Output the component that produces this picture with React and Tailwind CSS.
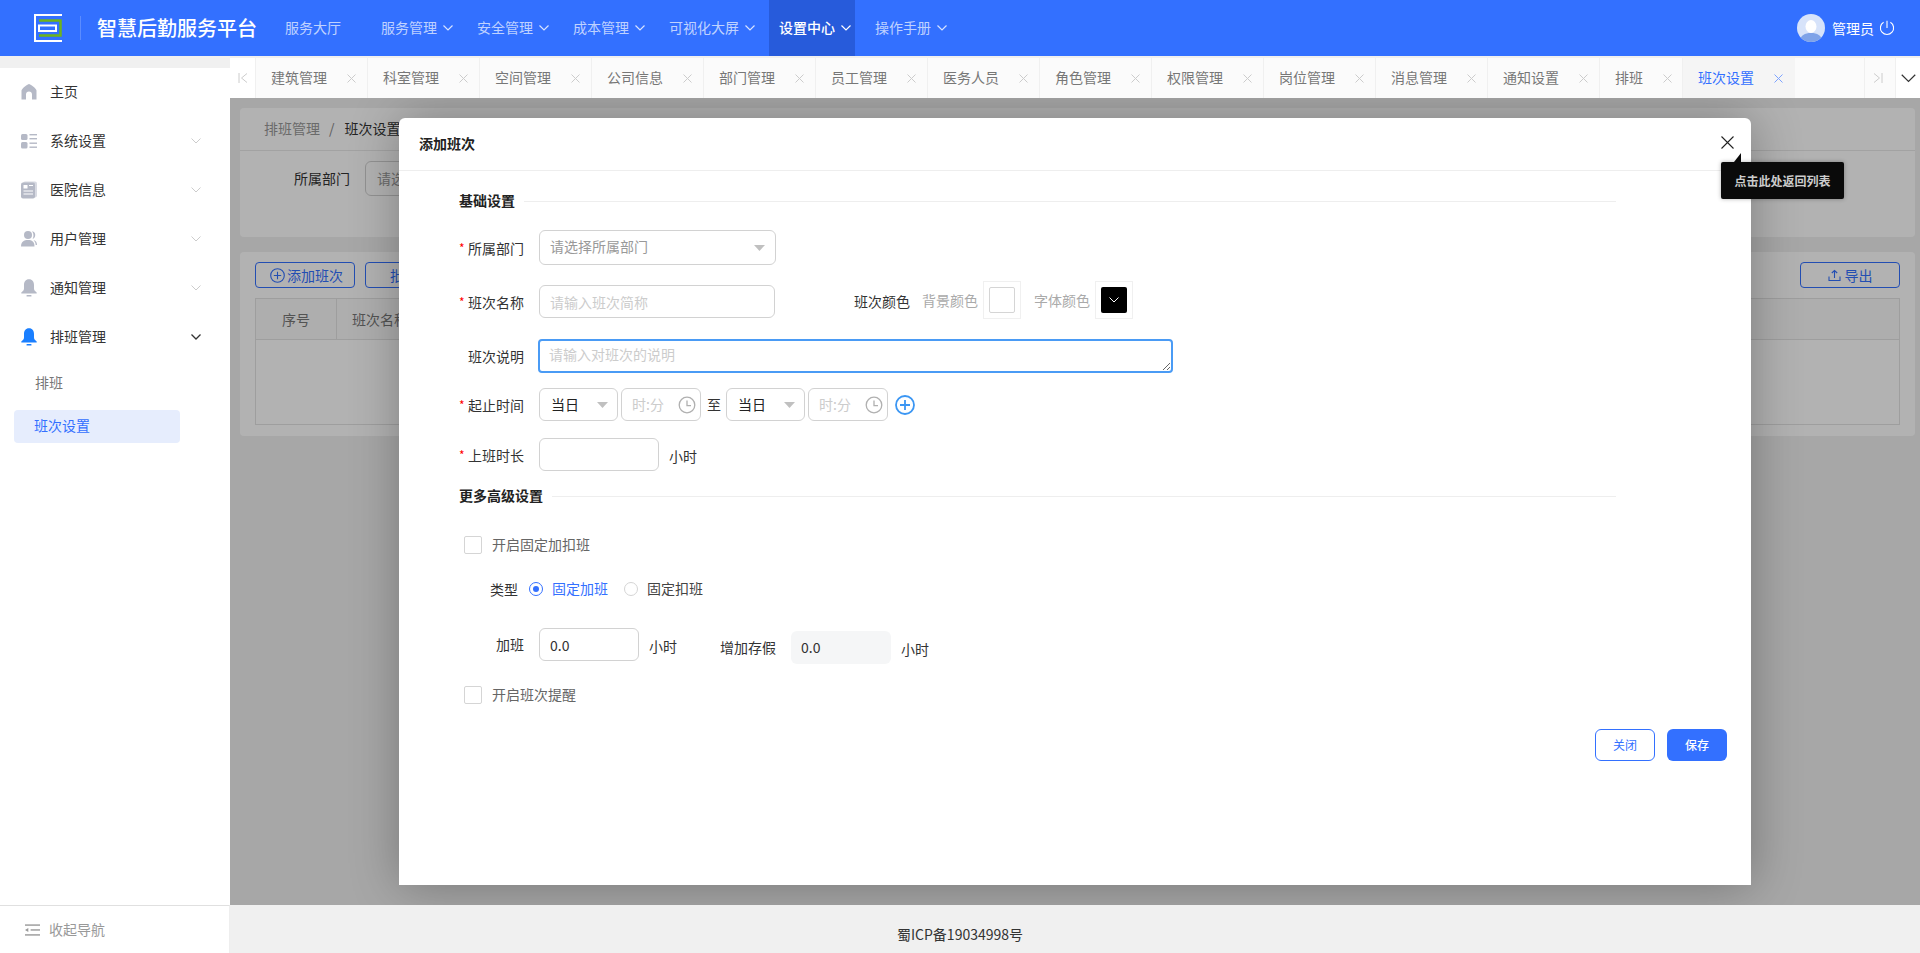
import React from "react";

const Chev = ({ className = "", w = 10, h = 6, sw = 1 }) => (
  <svg width={w} height={h} viewBox="0 0 10 6" className={className} fill="none" stroke="currentColor" strokeWidth={sw}>
    <path d="M0.5 0.5 L5 5 L9.5 0.5" />
  </svg>
);

const Cross = ({ className = "" }) => (
  <svg width="9" height="9" viewBox="0 0 9 9" className={className} fill="none" stroke="currentColor" strokeWidth="1">
    <path d="M0.5 0.5 L8.5 8.5 M8.5 0.5 L0.5 8.5" />
  </svg>
);

const Caret = () => (
  <svg width="11" height="6" viewBox="0 0 11 6" className="shrink-0 text-[#c0c0c0]" fill="currentColor">
    <path d="M0 0 H11 L5.5 6 Z" />
  </svg>
);

const Clock = () => (
  <svg width="18" height="18" viewBox="0 0 18 18" fill="none" stroke="#b0b0b0" strokeWidth="1.3" className="shrink-0">
    <circle cx="9" cy="9" r="7.8" />
    <path d="M9 4.5 V9.6 H13" />
  </svg>
);

const tabs = ["建筑管理", "科室管理", "空间管理", "公司信息", "部门管理", "员工管理", "医务人员", "角色管理", "权限管理", "岗位管理", "消息管理", "通知设置"];

const iconClass = "w-[16px] h-[18px]";
const HomeIcon = () => (
  <svg viewBox="0 0 16 18" className={iconClass} fill="#b5b9c6">
    <path d="M8 1 C9 1 15.5 5.5 15.5 7.5 V16.5 H11 V11.5 C11 9.5 9.8 8.5 8 8.5 C6.2 8.5 5 9.5 5 11.5 V16.5 H.5 V7.5 C.5 5.5 7 1 8 1 Z" />
  </svg>
);
const GridIcon = () => (
  <svg viewBox="0 0 16 18" className={iconClass} fill="#b5b9c6">
    <rect x="0" y="2" width="6.5" height="6" rx="1.5" />
    <rect x="0" y="10" width="6.5" height="6.5" rx="1.5" />
    <rect x="8.5" y="2" width="7.5" height="1.4" />
    <rect x="8.5" y="6" width="7.5" height="1.4" />
    <rect x="8.5" y="10.5" width="7.5" height="1.4" />
    <rect x="8.5" y="14.5" width="7.5" height="1.4" />
  </svg>
);
const DocIcon = () => (
  <svg viewBox="0 0 16 18" className={iconClass}>
    <rect x="2" y="0.5" width="14" height="16" rx="2" fill="#d8dae2" />
    <rect x="0" y="1.5" width="14" height="16" rx="2" fill="#b5b9c6" />
    <rect x="2.5" y="4" width="4" height="3.5" fill="#fff" />
    <rect x="8" y="4" width="4" height="1" fill="#fff" />
    <rect x="2.5" y="9.5" width="9.5" height="1" fill="#fff" />
    <rect x="2.5" y="12.5" width="9.5" height="1" fill="#fff" />
  </svg>
);
const UserIcon = () => (
  <svg viewBox="0 0 16 18" className={iconClass} fill="#b5b9c6">
    <circle cx="7" cy="5" r="4" />
    <path d="M0 16.5 C0 11.5 3 10 7 10 C11 10 13.5 11.5 13.5 16.5 Z" />
    <path d="M11 1.2 C13.5 1.6 14.5 3.4 14.2 5.4 C14 7 13 8.4 11.6 8.8 C12.8 7 13 3.4 11 1.2 Z" />
    <path d="M12.5 10 C15 10.5 16 12.5 16 15 H14.7 C14.5 13 14 11.5 12.5 10 Z" />
  </svg>
);
const BellIcon = ({ color = "#b5b9c6" }) => (
  <svg viewBox="0 0 16 18" className={iconClass} fill={color}>
    <path d="M8 .3 C4.6 .3 3 3 3 6 V9.5 C3 11.3 1.8 12.4 .3 13.4 V14.6 H15.7 V13.4 C14.2 12.4 13 11.3 13 9.5 V6 C13 3 11.4 .3 8 .3 Z" />
    <rect x="5.5" y="16" width="5" height="1.6" rx=".6" />
  </svg>
);

const menu = [
  ["主页", HomeIcon, false],
  ["系统设置", GridIcon, true],
  ["医院信息", DocIcon, true],
  ["用户管理", UserIcon, true],
  ["通知管理", BellIcon, true],
];

const Label = ({ req, children }) => (
  <div className="w-[80px] shrink-0 flex items-center text-[14px] leading-5 text-[#333] pt-[1px]">
    <span className="w-[9px] shrink-0 text-[12px] leading-none text-[#f00]">{req ? "*" : ""}</span>
    {children}
  </div>
);

const Section = ({ children }) => (
  <div className="w-[1157px] h-5 flex items-center gap-[9px]">
    <span className="text-[14px] leading-5 font-bold text-[#222] pb-[2px]">{children}</span>
    <span className="flex-1 h-px bg-[#eeeeee]" />
  </div>
);

const box = "border border-[#d2d2d2] rounded-[6px] bg-white";

const DaySelect = ({ className }) => (
  <div className={`${box} ${className} h-[33px] flex items-center justify-between pl-[11px] pr-[9px] text-[14px] text-[#222]`}>
    当日
    <Caret />
  </div>
);

const TimeBox = () => (
  <div className={`${box} w-[80px] h-[33px] flex items-center justify-between pl-[10px] pr-[4px] text-[14px] text-[#ccc]`}>
    时:分
    <Clock />
  </div>
);

const Check = ({ children }) => (
  <div className="flex items-center h-[18px] ml-[5px] gap-[10px] text-[14px] text-[#666]">
    <span className="w-[18px] h-[18px] border border-[#d5d5d5] rounded-[2px] bg-white" />
    <span className="pb-[2px]">{children}</span>
  </div>
);

export default function App() {
  return (
    <div className="w-[1920px] h-[953px] flex flex-col overflow-hidden bg-[#f0f0f0] font-['Noto_Sans_CJK_SC',sans-serif]">
      {/* Header */}
      <header className="h-14 shrink-0 bg-[#3370ff] flex items-center text-white">
        <svg width="28" height="28" viewBox="0 0 28 28" fill="none" className="ml-[34px] shrink-0">
          <path d="M5 6.5 H26.5 V21.5 H5" stroke="#6fb31a" strokeWidth="2.5" />
          <path d="M28 1 H1 V27 H28" stroke="#ffffff" strokeWidth="2" />
          <rect x="5" y="11.5" width="17" height="5.5" stroke="#ffffff" strokeWidth="2" />
        </svg>
        <span className="ml-[18px] w-px h-6 bg-white/20" />
        <span className="ml-4 text-[20px] leading-7 font-medium">智慧后勤服务平台</span>
        <nav className="ml-[18px] flex gap-[10px] h-14 text-[14px] text-white/70">
          <div className="w-[86px] pl-[10px] pb-[2px] flex items-center">服务大厅</div>
          {["服务管理", "安全管理", "成本管理", "可视化大屏"].map((t) => (
            <div key={t} className="pl-[10px] pr-[4px] flex items-center gap-[6px]">
              <span className="pb-[2px]">{t}</span>
              <Chev sw={1.2} className="text-white/80" />
            </div>
          ))}
          <div className="pl-[10px] pr-[4px] flex items-center gap-[6px] bg-[#275bdb] text-white font-medium">
            <span className="pb-[2px]">设置中心</span>
            <Chev sw={1.2} />
          </div>
          <div className="pl-[10px] pr-[4px] flex items-center gap-[6px]">
            <span className="pb-[2px]">操作手册</span>
            <Chev sw={1.2} className="text-white/80" />
          </div>
        </nav>
        <div className="ml-auto pr-[25px] flex items-center">
          <svg width="28" height="28" viewBox="0 0 28 28" className="shrink-0">
            <defs>
              <clipPath id="av">
                <circle cx="14" cy="14" r="14" />
              </clipPath>
            </defs>
            <g clipPath="url(#av)">
              <rect width="28" height="28" fill="#d7e3fa" />
              <path d="M3 28 C3 21 8 19 14 19 C20 19 25 21 25 28 Z" fill="#7fa3e8" />
              <ellipse cx="14" cy="12.5" rx="5.5" ry="6.5" fill="#ffffff" />
            </g>
          </svg>
          <span className="ml-[7px] text-[14px] leading-5">管理员</span>
          <svg width="16" height="16" viewBox="0 0 16 16" fill="none" stroke="#ffffff" strokeWidth="1.1" className="ml-[5px]">
            <path d="M4.6 2.2 A6.6 6.6 0 1 0 11.4 2.2" />
            <path d="M8 .8 V8" />
          </svg>
        </div>
      </header>

      <div className="flex-1 min-h-0 flex">
        {/* Sidebar */}
        <aside className="w-[230px] shrink-0 flex flex-col pt-3">
          <div className="flex-1 bg-white">
            {menu.map(([t, Icon, arrow]) => (
              <div key={t} className="h-[49px] flex items-center pl-[21px] pr-[29px] pb-[2px] text-[14px] text-[#333]">
                <Icon />
                <span className="ml-[13px]">{t}</span>
                {arrow && <Chev className="ml-auto text-[#cccccc]" />}
              </div>
            ))}
            <div className="h-[49px] flex items-center pl-[21px] pr-[29px] pb-[2px] text-[14px] text-[#333]">
              <BellIcon color="#1a7fff" />
              <span className="ml-[13px]">排班管理</span>
              <Chev className="ml-auto text-[#333]" sw={1.3} />
            </div>
            <div className="pt-[5px] flex flex-col gap-[10px] text-[14px]">
              <div className="h-[33px] flex items-center pl-[35px] pb-[2px] text-[#777]">排班</div>
              <div className="h-[33px] ml-[14px] w-[166px] flex items-center pl-5 pb-[2px] rounded-[4px] bg-[#e6edfd] text-[#3370ff]">班次设置</div>
            </div>
          </div>
          <div className="h-12 shrink-0 bg-white border-t border-[#e0e0e0] border-r border-r-[#eeeeee] flex items-center pl-[25px] gap-[9px] text-[14px] text-[#999]">
            <svg width="15" height="14" viewBox="0 0 16 14" fill="#999999">
              <rect x="0" y="1" width="16" height="1.5" />
              <rect x="6" y="6.2" width="10" height="1.5" />
              <rect x="0" y="11.5" width="16" height="1.5" />
              <path d="M0 7 L3.5 4.8 V9.2 Z" />
            </svg>
            收起导航
          </div>
        </aside>

        {/* Main */}
        <div className="flex-1 min-w-0 flex flex-col pt-[2px]">
          {/* Tabs */}
          <div className="h-10 shrink-0 flex bg-[#fbfbfb] text-[14px]">
            <div className="w-[26px] shrink-0 flex items-center justify-center border-r border-[#f0f0f0] bg-white">
              <svg width="10" height="10" viewBox="0 0 10 10" fill="none" stroke="#cccccc" strokeWidth="1">
                <path d="M1 0 V10 M9 .5 L3.5 5 L9 9.5" />
              </svg>
            </div>
            {tabs.map((t) => (
              <div key={t} className="flex items-center pl-[15px] pr-[11px] gap-[20px] border-r border-[#f0f0f0] text-[#777]">
                <span className="pb-[2px]">{t}</span>
                <Cross className="text-[#cccccc]" />
              </div>
            ))}
            <div className="flex items-center pl-[15px] pr-[10px] gap-[20px] border-r border-[#f0f0f0] text-[#777]">
              <span className="pb-[2px]">排班</span>
              <Cross className="text-[#cccccc]" />
            </div>
            <div className="flex items-center pl-[15px] pr-[12px] gap-[20px] bg-[#f5f5f5] text-[#3370ff]">
              <span className="pb-[2px]">班次设置</span>
              <Cross className="text-[#7da3ff]" />
            </div>
            <div className="ml-auto w-[31px] flex items-center justify-center pr-[4px] border-l border-[#f0f0f0]">
              <svg width="10" height="10" viewBox="0 0 10 10" fill="none" stroke="#cccccc" strokeWidth="1">
                <path d="M9 0 V10 M1 .5 L6.5 5 L1 9.5" />
              </svg>
            </div>
            <div className="w-[25px] flex items-center justify-center border-l border-[#f0f0f0] bg-white text-[#333]">
              <Chev w={15} h={9} sw={0.8} />
            </div>
          </div>

          {/* Content */}
          <div className="relative flex-1 min-h-0 pt-[10px] pl-[10px] pr-[5px]">
            <section className="h-[129px] bg-white rounded-[4px]">
              <div className="h-[43px] border-b border-[#e8e8e8] flex items-center pl-[24px] pb-[2px] text-[14px]">
                <span className="text-[#999]">排班管理</span>
                <span className="ml-[9px] mr-[10px] text-[#888]">/</span>
                <span className="text-[#333]">班次设置</span>
              </div>
              <div className="pt-[10px] pl-[54px] flex items-center text-[14px]">
                <span className="text-[#333]">所属部门</span>
                <div className={`${box} ml-[15px] w-[220px] h-[35px] flex items-center pl-[11px] text-[#999]`}>请选择</div>
              </div>
            </section>
            <section className="mt-[15px] h-[184px] bg-white rounded-[4px] pt-[10px] pl-[15px] pr-[15px]">
              <div className="flex gap-[10px] text-[14px]">
                <div className="w-[100px] h-[26px] border border-[#3370ff] rounded-[4px] flex items-center pl-[14px] gap-[2px] text-[#3370ff]">
                  <svg width="15" height="15" viewBox="0 0 15 15" fill="none" stroke="currentColor" strokeWidth="1.1">
                    <circle cx="7.5" cy="7.5" r="6.8" />
                    <path d="M7.5 3.8 V11.2 M3.8 7.5 H11.2" />
                  </svg>
                  添加班次
                </div>
                <div className="w-[100px] h-[26px] border border-[#3370ff] rounded-[4px] flex items-center pl-[24px] text-[#3370ff]">批量导入</div>
                <div className="ml-auto w-[100px] h-[26px] border border-[#3370ff] rounded-[4px] flex items-center justify-center gap-[4px] text-[#3370ff]">
                  <svg width="13" height="13" viewBox="0 0 13 13" fill="none" stroke="currentColor" strokeWidth="1.1">
                    <path d="M1 7.5 V11.5 H12 V7.5 M6.5 9 V1.5 M3.8 4 L6.5 1.5 L9.2 4" />
                  </svg>
                  导出
                </div>
              </div>
              <div className="mt-[10px] h-[127px] border border-[#e2e2e2] text-[14px] text-[#777]">
                <div className="h-[41px] flex border-b border-[#e2e2e2] bg-[#fafafa]">
                  <div className="w-[81px] border-r border-[#e2e2e2] flex items-center justify-center">序号</div>
                  <div className="pl-[15px] flex items-center">班次名称</div>
                </div>
              </div>
            </section>

            {/* Overlay + modal */}
            <div className="absolute inset-0 bg-black/30 overflow-hidden">
              <div className="absolute left-[169px] top-5 w-[1352px] h-[767px] bg-white rounded-t-[6px] shadow-[1px_1px_50px_rgba(0,0,0,0.3)]">
                <div className="h-[53px] border-b border-[#eeeeee] flex items-center pl-[20px] pb-[2px] text-[14px] font-bold text-[#222]">添加班次</div>
                <svg width="13" height="13" viewBox="0 0 13 13" fill="none" stroke="#222222" strokeWidth="1.1" className="absolute left-[1322px] top-[18px]">
                  <path d="M.5 .5 L12.5 12.5 M12.5 .5 L.5 12.5" />
                </svg>
                {/* tooltip */}
                <div className="absolute left-[1322px] top-[44px] w-[123px] h-[37px] bg-[#0a0a0a] rounded-[2px] shadow-[0_0_4px_rgba(0,0,0,0.3)] flex items-center justify-center text-[12px] font-bold text-[#cccccc]">
                  <svg width="8" height="9" viewBox="0 0 8 9" fill="#0a0a0a" className="absolute left-[13px] -top-[9px]">
                    <path d="M7 0 V9 H0 Z" />
                  </svg>
                  点击此处返回列表
                </div>

                <div className="pl-[60px] pr-[24px] pt-[20px] flex flex-col">
                  <Section>基础设置</Section>

                  <div className="mt-[19px] flex items-center h-[35px]">
                    <Label req>所属部门</Label>
                    <div className={`${box} w-[237px] h-[35px] flex items-center justify-between pl-[10px] pr-[10px] text-[14px] text-[#999]`}>
                      <span className="pb-[2px]">请选择所属部门</span>
                      <Caret />
                    </div>
                  </div>

                  <div className="mt-[20px] flex items-center h-[33px]">
                    <Label req>班次名称</Label>
                    <input placeholder="请输入班次简称" className={`${box} w-[236px] h-[33px] pl-[10px] text-[14px] outline-none placeholder:text-[#cccccc]`} />
                    <span className="ml-[79px] text-[14px] text-[#333]">班次颜色</span>
                    <div className="ml-[12px] self-start -mt-[4px] h-[38px] flex items-center text-[14px] text-[#aaaaaa]">
                      背景颜色
                      <div className="ml-[5px] w-[38px] h-[38px] border border-[#f0f0f0] flex items-center justify-center">
                        <span className="w-[26px] h-[26px] border border-[#d5d5d5] rounded-[2px] bg-white" />
                      </div>
                      <span className="ml-[13px]">字体颜色</span>
                      <div className="ml-[5px] w-[38px] h-[38px] border border-[#f0f0f0] flex items-center justify-center">
                        <span className="w-[26px] h-[26px] rounded-[2px] bg-black flex items-center justify-center text-white">
                          <Chev />
                        </span>
                      </div>
                    </div>
                  </div>

                  <div className="mt-[21px] flex items-center h-[34px]">
                    <div className="pb-[2px]">
                      <Label>班次说明</Label>
                    </div>
                    <textarea
                      placeholder="请输入对班次的说明"
                      className="-ml-[1px] w-[635px] h-[34px] min-h-[34px] px-[9px] py-[3px] border-2 border-[#4a9bf5] rounded-[4px] text-[14px] leading-5 outline-none placeholder:text-[#cccccc]"
                    />
                  </div>

                  <div className="mt-[15px] flex items-center h-[33px]">
                    <Label req>起止时间</Label>
                    <DaySelect className="w-[79px]" />
                    <div className="ml-[3px]">
                      <TimeBox />
                    </div>
                    <span className="ml-[6px] mr-[5px] text-[14px] text-[#333]">至</span>
                    <DaySelect className="w-[79px]" />
                    <div className="ml-[3px]">
                      <TimeBox />
                    </div>
                    <svg width="20" height="20" viewBox="0 0 20 20" fill="none" stroke="#3b96f3" strokeWidth="1.8" className="ml-[7px]">
                      <circle cx="10" cy="10" r="9" />
                      <path d="M10 5 V15 M5 10 H15" />
                    </svg>
                  </div>

                  <div className="mt-[17px] flex items-center h-[33px]">
                    <Label req>上班时长</Label>
                    <input className={`${box} w-[120px] h-[33px] outline-none`} />
                    <span className="ml-[10px] pt-[4px] text-[14px] text-[#333]">小时</span>
                  </div>

                  <div className="mt-[15px]">
                    <Section>更多高级设置</Section>
                  </div>

                  <div className="mt-[30px]">
                    <Check>开启固定加扣班</Check>
                  </div>

                  <div className="mt-[25px] h-5 flex items-center ml-[31px] text-[14px]">
                    <span className="text-[#333] pt-[1px]">类型</span>
                    <span className="ml-[11px] w-[14px] h-[14px] rounded-full border border-[#3370ff] flex items-center justify-center">
                      <span className="w-[6px] h-[6px] rounded-full bg-[#3370ff]" />
                    </span>
                    <span className="ml-[9px] pb-[2px] text-[#3370ff]">固定加班</span>
                    <span className="ml-[16px] w-[14px] h-[14px] rounded-full border border-[#d5d5d5]" />
                    <span className="ml-[9px] pb-[2px] text-[#444]">固定扣班</span>
                  </div>

                  <div className="mt-[29px] h-[36px] flex items-start text-[14px] text-[#333]">
                    <span className="ml-[37px] w-[43px] h-[33px] flex items-center">加班</span>
                    <input defaultValue="0.0" className={`${box} w-[100px] h-[33px] pl-[10px] outline-none text-[#333]`} />
                    <span className="ml-[10px] h-[33px] flex items-center pt-[3px]">小时</span>
                    <span className="ml-[43px] mt-[3px] h-[33px] flex items-center">增加存假</span>
                    <div className="ml-[15px] mt-[3px] w-[100px] h-[33px] rounded-[6px] bg-[#f5f6f7] pl-[10px] flex items-center">0.0</div>
                    <span className="ml-[10px] mt-[3px] h-[33px] flex items-center pt-[3px]">小时</span>
                  </div>

                  <div className="mt-[22px]">
                    <Check>开启班次提醒</Check>
                  </div>

                  <div className="mt-[25px] flex justify-end gap-3 text-[12px]">
                    <div className="w-[60px] h-8 border border-[#3370ff] rounded-[6px] flex items-center justify-center text-[#3370ff]">关闭</div>
                    <div className="w-[60px] h-8 rounded-[6px] bg-[#3370ff] flex items-center justify-center text-white font-medium">保存</div>
                  </div>
                </div>
              </div>
            </div>
          </div>

          {/* Footer */}
          <footer className="h-12 shrink-0 pr-[230px] pt-[11px] flex items-center justify-center text-[14px] text-[#333]">蜀ICP备19034998号</footer>
        </div>
      </div>
    </div>
  );
}
